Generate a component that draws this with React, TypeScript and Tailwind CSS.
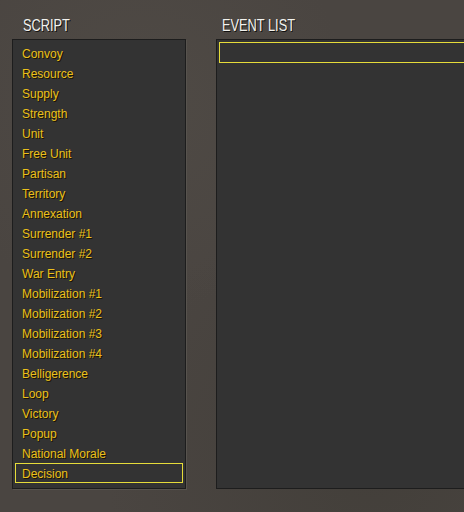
const scripts = [
  'Convoy',
  'Resource',
  'Supply',
  'Strength',
  'Unit',
  'Free Unit',
  'Partisan',
  'Territory',
  'Annexation',
  'Surrender #1',
  'Surrender #2',
  'War Entry',
  'Mobilization #1',
  'Mobilization #2',
  'Mobilization #3',
  'Mobilization #4',
  'Belligerence',
  'Loop',
  'Victory',
  'Popup',
  'National Morale',
  'Decision',
];

const selected = 'Decision';

function Heading({ children, className }: { children: string; className: string }) {
  return (
    <div className={`flex h-[39px] items-end pb-[5px] ${className}`}>
      <span className="inline-block origin-left scale-x-[0.8] whitespace-nowrap font-['Liberation_Sans',sans-serif] text-[16px] leading-none text-[#f2f2ee] [text-shadow:1px_1px_0_#111]">
        {children}
      </span>
    </div>
  );
}

export default function App() {
  return (
    <div className="flex h-[512px] w-[464px] overflow-hidden bg-[#4a4541] bg-[radial-gradient(circle_at_30%_20%,#4f4a45_0%,transparent_40%),radial-gradient(circle_at_80%_90%,#433f3a_0%,transparent_45%)] pl-[12px] font-['Liberation_Sans',sans-serif]">
      <div className="flex w-[174px] shrink-0 flex-col">
        <Heading className="pl-[11px]">SCRIPT</Heading>
        <div className="h-[450px] border border-[#1d1d1d] bg-[#333333] px-[2px] pt-[3px] shadow-[1px_1px_0_#57534e]">
          {scripts.map((name) => (
            <div
              key={name}
              className={`flex h-[20px] items-center pl-[6px] pt-[1px] text-[12px] leading-none text-[#ebc01c] [text-shadow:1px_1px_0_#1a1400] ${
                name === selected ? 'border border-[#e6dc3a]' : 'border border-transparent'
              }`}
            >
              {name}
            </div>
          ))}
        </div>
      </div>
      <div className="ml-[30px] flex w-[300px] shrink-0 flex-col">
        <Heading className="pl-[6px]">EVENT LIST</Heading>
        <div className="h-[450px] border border-r-0 border-[#1d1d1d] bg-[#333333] pl-[2px] pt-[2px]">
          <div className="h-[21px] border border-r-0 border-[#e6dc3a]" />
        </div>
      </div>
    </div>
  );
}
